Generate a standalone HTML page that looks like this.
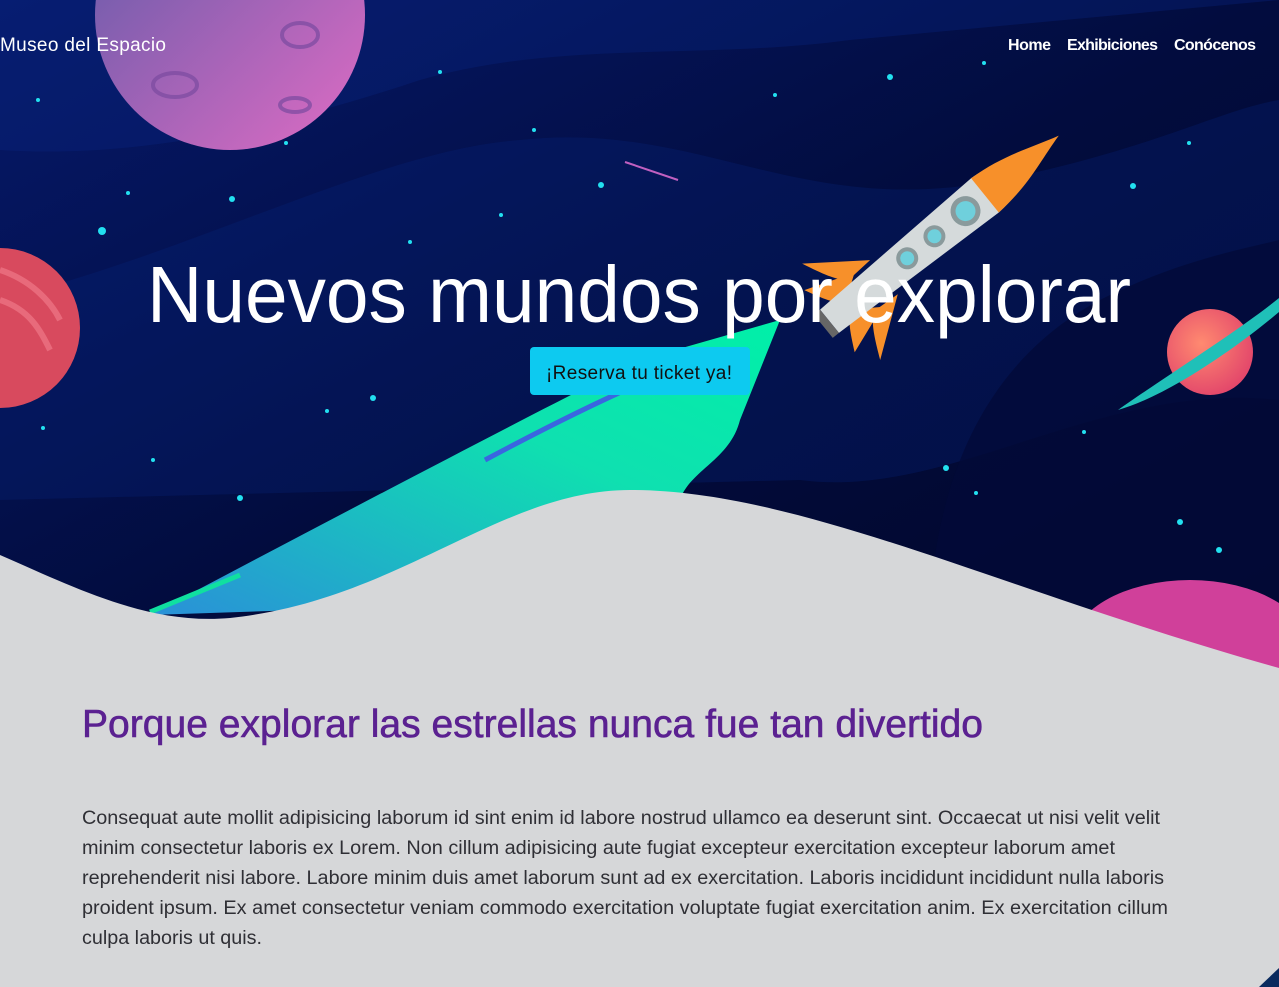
<!DOCTYPE html>
<html><head><meta charset="utf-8"><style>
html,body{margin:0;padding:0;width:1279px;height:987px;overflow:hidden;background:#d6d7d9;font-family:"Liberation Sans",sans-serif}
svg{display:block}
</style></head><body>
<svg width="1279" height="987" viewBox="0 0 1279 987" xmlns="http://www.w3.org/2000/svg">
<defs>
<linearGradient id="sky" x1="0" y1="0" x2="1" y2="1"><stop offset="0" stop-color="#06196a"/><stop offset="0.5" stop-color="#020c3e"/><stop offset="1" stop-color="#010628"/></linearGradient>
<linearGradient id="moon" x1="0" y1="0" x2="1" y2="1"><stop offset="0" stop-color="#5e5aa8"/><stop offset="1" stop-color="#e06cc4"/></linearGradient>
<linearGradient id="flame" x1="0" y1="1" x2="1" y2="0"><stop offset="0" stop-color="#2a90d8"/><stop offset="0.6" stop-color="#0fe0b0"/><stop offset="1" stop-color="#00f0a8"/></linearGradient>
<radialGradient id="pl" cx="0.4" cy="0.4" r="0.7"><stop offset="0" stop-color="#ff8a70"/><stop offset="1" stop-color="#e0406a"/></radialGradient>
</defs>
<rect width="1279" height="700" fill="url(#sky)"/>
<path d="M0,150 C150,160 300,120 420,80 C560,40 700,60 850,40 L1279,0 L0,0Z" fill="#0a2580" opacity="0.35"/>
<path d="M0,300 C200,250 380,150 520,140 C700,120 800,220 1000,180 C1150,150 1220,110 1279,100 L1279,400 C1100,380 950,500 800,480 L0,500Z" fill="#08237a" opacity="0.3"/>
<path d="M930,700 C920,550 950,380 1100,300 C1180,260 1240,250 1279,240 L1279,700Z" fill="#020a38" opacity="0.8"/>
<circle cx="230" cy="15" r="135" fill="url(#moon)"/>
<g fill="none" stroke="#7a4aa0" stroke-width="4" opacity="0.7"><ellipse cx="175" cy="85" rx="22" ry="12"/><ellipse cx="300" cy="35" rx="18" ry="12"/><ellipse cx="295" cy="105" rx="15" ry="7"/></g>
<circle cx="0" cy="328" r="80" fill="#d84a5e"/>
<path d="M0,270 C30,280 50,300 60,320 M0,300 C30,310 40,330 50,350" stroke="#f07888" stroke-width="6" fill="none" opacity="0.7"/>
<circle cx="1210" cy="352" r="43" fill="url(#pl)"/>
<path d="M1118,410 C1160,380 1240,330 1279,298 L1279,312 C1240,345 1170,395 1118,410Z" fill="#1fc0b8"/>
<ellipse cx="1190" cy="650" rx="120" ry="70" fill="#d0409a"/>
<path d="M150,615 C330,520 520,420 640,360 L780,320 L740,420 C730,460 690,470 680,500 L450,560 L300,610 Z" fill="url(#flame)"/>
<path d="M485,460 C560,420 640,380 700,360" stroke="#3a66e0" stroke-width="5" fill="none"/>
<path d="M150,612 L240,575" stroke="#10e0a0" stroke-width="5"/>
<g transform="translate(915,252) rotate(-39)">
<path d="M-60,-22 L-110,-40 C-100,-20 -95,-10 -85,-5Z M-60,22 L-110,40 C-100,20 -95,10 -85,5Z" fill="#f7902a"/>
<path d="M-40,-22 L-95,-62 C-85,-40 -80,-30 -70,-20Z M-40,22 L-95,62 C-85,40 -80,30 -70,20Z" fill="#f7902a"/>
<path d="M-110,-15 L90,-22 C120,-20 140,-10 150,0 C140,10 120,20 90,22 L-110,15 Z" fill="#d5dadb"/>
<path d="M-110,-15 L-118,-15 L-118,15 L-110,15Z" fill="#666"/>
<path d="M90,-22 C130,-20 155,-8 185,0 C155,8 130,20 90,22 Z" fill="#f7902a"/>
<circle cx="65" cy="0" r="15" fill="#8a9a9c"/><circle cx="65" cy="0" r="10" fill="#6fd0dc"/>
<circle cx="25" cy="0" r="11" fill="#8a9a9c"/><circle cx="25" cy="0" r="7" fill="#6fd0dc"/>
<circle cx="-10" cy="0" r="11" fill="#8a9a9c"/><circle cx="-10" cy="0" r="7" fill="#6fd0dc"/>
</g>
<g fill="#22e0f0">
<circle cx="102" cy="231" r="4"/><circle cx="232" cy="199" r="3"/><circle cx="601" cy="185" r="3"/><circle cx="534" cy="130" r="2"/><circle cx="890" cy="77" r="3"/><circle cx="1133" cy="186" r="3"/><circle cx="240" cy="498" r="3"/><circle cx="373" cy="398" r="3"/><circle cx="946" cy="468" r="3"/><circle cx="1180" cy="522" r="3"/><circle cx="1219" cy="550" r="3"/><circle cx="38" cy="100" r="2"/><circle cx="286" cy="143" r="2"/><circle cx="440" cy="72" r="2"/><circle cx="984" cy="63" r="2"/><circle cx="775" cy="95" r="2"/><circle cx="43" cy="428" r="2"/><circle cx="976" cy="493" r="2"/><circle cx="1084" cy="432" r="2"/><circle cx="327" cy="411" r="2"/><circle cx="153" cy="460" r="2"/><circle cx="501" cy="215" r="2"/><circle cx="1189" cy="143" r="2"/><circle cx="410" cy="242" r="2"/><circle cx="128" cy="193" r="2"/>
</g>
<path d="M625,162 L678,180" stroke="#c060c0" stroke-width="2"/>
<path d="M0,555 C80,590 150,625 230,618 C400,600 500,490 630,490 C800,490 1000,590 1279,668 L1279,987 L0,987 Z" fill="#d6d7d9"/>
<path d="M1259,987 L1279,968 L1279,987Z" fill="#0a2a5e"/>
<text x="0" y="51" font-size="19" fill="#fff" textLength="166" font-family="Liberation Sans">Museo del Espacio</text>
<g font-size="16" fill="#fff" font-weight="bold" font-family="Liberation Sans">
<text x="1008" y="50" textLength="43">Home</text>
<text x="1067" y="50" textLength="91">Exhibiciones</text>
<text x="1174" y="50" textLength="82">Conócenos</text>
</g>
<text x="147" y="322" font-size="80" fill="#fff" textLength="984" lengthAdjust="spacingAndGlyphs" font-family="Liberation Sans">Nuevos mundos por explorar</text>
<rect x="530" y="347" width="220" height="48" rx="4" fill="#0dcaf0"/>
<text x="546" y="379" font-size="19" fill="#111" textLength="186" font-family="Liberation Sans">¡Reserva tu ticket ya!</text>
<text x="82" y="737" font-size="39" fill="#5b2191" stroke="#5b2191" stroke-width="0.6" textLength="901" lengthAdjust="spacingAndGlyphs" font-family="Liberation Sans">Porque explorar las estrellas nunca fue tan divertido</text>
<g font-size="19" fill="#2f2f35" font-family="Liberation Sans">
<text x="82" y="824" textLength="1078" lengthAdjust="spacingAndGlyphs">Consequat aute mollit adipisicing laborum id sint enim id labore nostrud ullamco ea deserunt sint. Occaecat ut nisi velit velit</text>
<text x="82" y="854" textLength="1033" lengthAdjust="spacingAndGlyphs">minim consectetur laboris ex Lorem. Non cillum adipisicing aute fugiat excepteur exercitation excepteur laborum amet</text>
<text x="82" y="884" textLength="1082" lengthAdjust="spacingAndGlyphs">reprehenderit nisi labore. Labore minim duis amet laborum sunt ad ex exercitation. Laboris incididunt incididunt nulla laboris</text>
<text x="82" y="914" textLength="1086" lengthAdjust="spacingAndGlyphs">proident ipsum. Ex amet consectetur veniam commodo exercitation voluptate fugiat exercitation anim. Ex exercitation cillum</text>
<text x="82" y="944" textLength="180" lengthAdjust="spacingAndGlyphs">culpa laboris ut quis.</text>
</g>
</svg>
</body></html>
